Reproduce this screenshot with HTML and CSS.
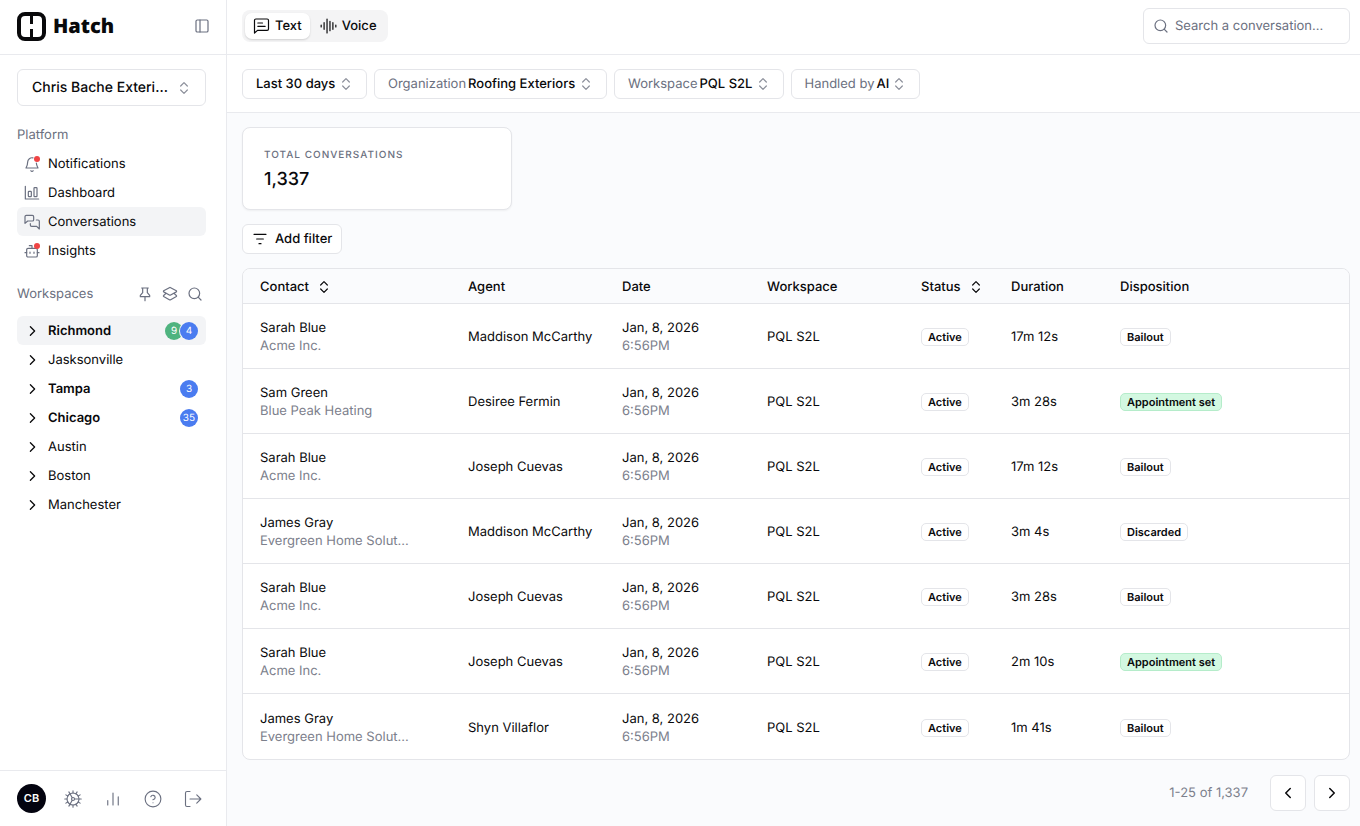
FILE: index.html
```html
<!DOCTYPE html>
<html lang="en">
<head>
  <meta charset="UTF-8" />
  <meta name="viewport" content="width=device-width, initial-scale=1.0"/>
  <title>Hatch - Conversations</title>
  <link rel="stylesheet" href="styles.css">
</head>
<body>

  <!-- icon sprite -->
  <svg class="sprite" aria-hidden="true">
    <symbol id="i-sort" viewBox="0 0 24 24"><path d="m7 15 5 5 5-5M7 9l5-5 5 5"/></symbol>
    <symbol id="i-right" viewBox="0 0 24 24"><path d="m9 18 6-6-6-6"/></symbol>
    <symbol id="i-left" viewBox="0 0 24 24"><path d="m15 18-6-6 6-6"/></symbol>
    <symbol id="i-search" viewBox="0 0 24 24"><circle cx="11" cy="11" r="8"/><path d="m21 21-4.3-4.3"/></symbol>
    <symbol id="i-panel" viewBox="0 0 24 24"><rect x="3" y="3" width="18" height="18" rx="2"/><path d="M9 3v18"/></symbol>
    <symbol id="i-bell" viewBox="0 0 24 24"><path d="M10.3 22a1.9 1.9 0 0 0 3.4 0M18.5 10.5c.3 3.5 1.3 5 2.5 7.500H3c1.500-2.500 2.500-5 2.500-9a6.500 6.500 0 0 1 8-6.200"/></symbol>
    <symbol id="i-chart" viewBox="0 0 24 24"><path d="M2 2v19h20"/><rect x="6.500" y="9.500" width="4.500" height="8" rx="1"/><rect x="15" y="4" width="4.500" height="13.500" rx="1"/></symbol>
    <symbol id="i-chats" viewBox="0 0 24 24"><path d="M14.500 8.500a2 2 0 0 1-2 2H5.500L1.500 14V4a2 2 0 0 1 2-2h9a2 2 0 0 1 2 2zM18.500 9H21a2 2 0 0 1 2 2v11.500l-4-4h-7.500a2 2 0 0 1-2-2V14.500"/></symbol>
    <symbol id="i-bot" viewBox="0 0 24 24"><path d="M12 8V4H8M1.500 14.500H4M20 14.500h2.500M15 13.500v2M9 13.500v2"/><rect x="4" y="8" width="16" height="13" rx="2"/></symbol>
    <symbol id="i-pin" viewBox="0 0 24 24"><path d="M12 16v6M7 3h10M8.500 3v7L5 14v2h14v-2l-3.500-4V3"/></symbol>
    <symbol id="i-layers" viewBox="0 0 24 24"><path d="M13 2.500a2 2 0 0 0-2 0L2.500 7.200a1 1 0 0 0 0 1.600L11 13.500a2 2 0 0 0 2 0l8.500-4.700a1 1 0 0 0 0-1.600zM6 11l-3.500 3.200a1 1 0 0 0 0 1.600l8.500 4.700a2 2 0 0 0 2 0l8.500-4.700a1 1 0 0 0 0-1.600L18 11"/></symbol>
    <symbol id="i-cog" viewBox="0 0 24 24"><circle cx="12" cy="12" r="8"/><circle cx="12" cy="12" r="2"/><path d="M14 12h9M11 10.300 6.500 2.500M11 13.700 6.500 21.500M12 1v3M12 20v3M1 12h3M17.500 2.500l-1.500 2.600M17.500 21.500l-1.500-2.600M2.500 6.500l2.600 1.500M21.500 6.500l-2.600 1.500M2.500 17.500l2.600-1.500M21.500 17.500l-2.600-1.500"/></symbol>
    <symbol id="i-bars" viewBox="0 0 24 24"><path d="M5 20v-6M12 20V4M19 20V9"/></symbol>
    <symbol id="i-help" viewBox="0 0 24 24"><circle cx="12" cy="12" r="10.500"/><path d="M9.100 9a3 3 0 0 1 5.800 1c0 2-3 3-3 3M12 17h.01"/></symbol>
    <symbol id="i-logout" viewBox="0 0 24 24"><path d="M8 22H4a2 2 0 0 1-2-2V4a2 2 0 0 1 2-2h4M8 12h14M17 6.500l5.500 5.500-5.500 5.500"/></symbol>
    <symbol id="i-message" viewBox="0 0 24 24"><path d="M22.500 16.500a2 2 0 0 1-2 2H6l-4.500 4V3.500a2 2 0 0 1 2-2h17a2 2 0 0 1 2 2zM6.500 7.500h7M6.500 12.500h11"/></symbol>
    <symbol id="i-audio" viewBox="0 0 24 24"><path d="M1 10.500v3M5.400 7v10M9.800 1.500v21M14.200 5v14M18.600 7v10M23 10.500v3"/></symbol>
    <symbol id="i-filter" viewBox="0 0 24 24"><path d="M3 5h18M7 12h10M10.500 19h3"/></symbol>
  </svg>

  <aside class="sidebar">
    <div class="brand">
      <a class="logo" href="#">
        <svg class="logo-mark" viewBox="0 0 29 29" aria-hidden="true">
          <rect x="2" y="2" width="25" height="25" rx="6"/>
          <path d="M14.500 3v9M14.500 17v9"/>
        </svg>
        Hatch
      </a>
      <button class="icon-btn" aria-label="Collapse sidebar"><svg class="icon"><use href="#i-panel"/></svg></button>
    </div>

    <div class="side-body">
      <div class="account">
        <select aria-label="Account"><option>Chris Bache Exteri...</option></select>
        <svg class="icon"><use href="#i-sort"/></svg>
      </div>

      <h2 class="side-title">Platform</h2>
      <nav class="side-nav" aria-label="Platform">
        <a href="#"><span class="nav-icon dot"><svg class="icon"><use href="#i-bell"/></svg></span>Notifications</a>
        <a href="#"><span class="nav-icon"><svg class="icon"><use href="#i-chart"/></svg></span>Dashboard</a>
        <a href="#" class="active"><span class="nav-icon"><svg class="icon"><use href="#i-chats"/></svg></span>Conversations</a>
        <a href="#"><span class="nav-icon dot"><svg class="icon"><use href="#i-bot"/></svg></span>Insights</a>
      </nav>

      <div class="side-head">
        <h2 class="side-title">Workspaces</h2>
        <div class="side-tools">
          <button class="icon-btn" aria-label="Pin"><svg class="icon"><use href="#i-pin"/></svg></button>
          <button class="icon-btn" aria-label="Group"><svg class="icon"><use href="#i-layers"/></svg></button>
          <button class="icon-btn" aria-label="Search workspaces"><svg class="icon"><use href="#i-search"/></svg></button>
        </div>
      </div>
      <nav class="side-nav workspaces" aria-label="Workspaces">
        <a href="#" class="active unread"><svg class="icon"><use href="#i-right"/></svg>Richmond<span class="counts"><span class="count green">9</span><span class="count">4</span></span></a>
        <a href="#"><svg class="icon"><use href="#i-right"/></svg>Jasksonville</a>
        <a href="#" class="unread"><svg class="icon"><use href="#i-right"/></svg>Tampa<span class="counts"><span class="count">3</span></span></a>
        <a href="#" class="unread"><svg class="icon"><use href="#i-right"/></svg>Chicago<span class="counts"><span class="count">35</span></span></a>
        <a href="#"><svg class="icon"><use href="#i-right"/></svg>Austin</a>
        <a href="#"><svg class="icon"><use href="#i-right"/></svg>Boston</a>
        <a href="#"><svg class="icon"><use href="#i-right"/></svg>Manchester</a>
      </nav>
    </div>

    <div class="side-footer">
      <span class="avatar">CB</span>
      <div class="footer-tools">
        <button class="icon-btn" aria-label="Settings"><svg class="icon"><use href="#i-cog"/></svg></button>
        <button class="icon-btn" aria-label="Reports"><svg class="icon"><use href="#i-bars"/></svg></button>
        <button class="icon-btn" aria-label="Help"><svg class="icon"><use href="#i-help"/></svg></button>
        <button class="icon-btn" aria-label="Log out"><svg class="icon"><use href="#i-logout"/></svg></button>
      </div>
    </div>
  </aside>

  <main class="main">
    <header class="topbar">
      <div class="tabs">
        <button class="tab active"><svg class="icon"><use href="#i-message"/></svg>Text</button>
        <button class="tab"><svg class="icon"><use href="#i-audio"/></svg>Voice</button>
      </div>
      <label class="search">
        <svg class="icon"><use href="#i-search"/></svg>
        <input type="text" placeholder="Search a conversation..." aria-label="Search a conversation">
      </label>
    </header>

    <div class="filters">
      <label class="filter"><select aria-label="Date range"><option>Last 30 days</option></select><svg class="icon"><use href="#i-sort"/></svg></label>
      <label class="filter"><span>Organization</span><select><option>Roofing Exteriors</option></select><svg class="icon"><use href="#i-sort"/></svg></label>
      <label class="filter"><span>Workspace</span><select><option>PQL S2L</option></select><svg class="icon"><use href="#i-sort"/></svg></label>
      <label class="filter"><span>Handled by</span><select><option>AI</option></select><svg class="icon"><use href="#i-sort"/></svg></label>
    </div>

    <div class="content">
      <div class="card">
        <div class="card-label">TOTAL CONVERSATIONS</div>
        <div class="card-value">1,337</div>
      </div>

      <button class="add-filter"><svg class="icon"><use href="#i-filter"/></svg>Add filter</button>

      <table class="table">
        <colgroup>
          <col class="col-contact"><col class="col-agent"><col class="col-date"><col class="col-workspace"><col class="col-status"><col class="col-duration"><col>
        </colgroup>
        <thead>
          <tr>
            <th><button class="sort">Contact<svg class="icon"><use href="#i-sort"/></svg></button></th>
            <th>Agent</th>
            <th>Date</th>
            <th>Workspace</th>
            <th><button class="sort">Status<svg class="icon"><use href="#i-sort"/></svg></button></th>
            <th>Duration</th>
            <th>Disposition</th>
          </tr>
        </thead>
        <tbody>
          <tr>
            <td>Sarah Blue<small>Acme Inc.</small></td>
            <td>Maddison McCarthy</td>
            <td>Jan, 8, 2026<small>6:56PM</small></td>
            <td>PQL S2L</td>
            <td><span class="badge">Active</span></td>
            <td>17m 12s</td>
            <td><span class="badge">Bailout</span></td>
          </tr>
          <tr>
            <td>Sam Green<small>Blue Peak Heating</small></td>
            <td>Desiree Fermin</td>
            <td>Jan, 8, 2026<small>6:56PM</small></td>
            <td>PQL S2L</td>
            <td><span class="badge">Active</span></td>
            <td>3m 28s</td>
            <td><span class="badge success">Appointment set</span></td>
          </tr>
          <tr>
            <td>Sarah Blue<small>Acme Inc.</small></td>
            <td>Joseph Cuevas</td>
            <td>Jan, 8, 2026<small>6:56PM</small></td>
            <td>PQL S2L</td>
            <td><span class="badge">Active</span></td>
            <td>17m 12s</td>
            <td><span class="badge">Bailout</span></td>
          </tr>
          <tr>
            <td>James Gray<small>Evergreen Home Solut...</small></td>
            <td>Maddison McCarthy</td>
            <td>Jan, 8, 2026<small>6:56PM</small></td>
            <td>PQL S2L</td>
            <td><span class="badge">Active</span></td>
            <td>3m 4s</td>
            <td><span class="badge">Discarded</span></td>
          </tr>
          <tr>
            <td>Sarah Blue<small>Acme Inc.</small></td>
            <td>Joseph Cuevas</td>
            <td>Jan, 8, 2026<small>6:56PM</small></td>
            <td>PQL S2L</td>
            <td><span class="badge">Active</span></td>
            <td>3m 28s</td>
            <td><span class="badge">Bailout</span></td>
          </tr>
          <tr>
            <td>Sarah Blue<small>Acme Inc.</small></td>
            <td>Joseph Cuevas</td>
            <td>Jan, 8, 2026<small>6:56PM</small></td>
            <td>PQL S2L</td>
            <td><span class="badge">Active</span></td>
            <td>2m 10s</td>
            <td><span class="badge success">Appointment set</span></td>
          </tr>
          <tr>
            <td>James Gray<small>Evergreen Home Solut...</small></td>
            <td>Shyn Villaflor</td>
            <td>Jan, 8, 2026<small>6:56PM</small></td>
            <td>PQL S2L</td>
            <td><span class="badge">Active</span></td>
            <td>1m 41s</td>
            <td><span class="badge">Bailout</span></td>
          </tr>
        </tbody>
      </table>

      <div class="pager">
        <span class="pager-text">1-25 of 1,337</span>
        <button aria-label="Previous page"><svg class="icon"><use href="#i-left"/></svg></button>
        <button aria-label="Next page"><svg class="icon"><use href="#i-right"/></svg></button>
      </div>
    </div>
  </main>

</body>
</html>
```
FILE: styles.css
```css
* {
  box-sizing: border-box;
  margin: 0;
  padding: 0;
}

body {
  display: flex;
  min-height: 100vh;
  background: #fafbfd;
  color: #09090b;
  font-family: Inter, sans-serif;
  font-size: 13px;
  line-height: 18px;
  text-rendering: geometricPrecision;
}

button,
select,
input {
  font: inherit;
  color: inherit;
  background: none;
  border: none;
  text-rendering: inherit;
}

button {
  cursor: pointer;
}

select {
  appearance: none;
  font-weight: 500;
  outline: none;
}

a {
  color: inherit;
  text-decoration: none;
}

.sprite {
  display: none;
}

.icon {
  width: 16px;
  height: 16px;
  flex: none;
  display: block;
  fill: none;
  stroke: currentColor;
  stroke-width: 1.8;
  stroke-linecap: round;
  stroke-linejoin: round;
}

.icon-btn {
  color: #6b7080;
}

/* sidebar */
.sidebar {
  width: 227px;
  flex: none;
  display: flex;
  flex-direction: column;
  background: #fff;
  border-right: 1px solid #e9eaee;
}

.brand {
  height: 55px;
  display: flex;
  align-items: center;
  justify-content: space-between;
  padding: 0 16px 2px 17px;
  border-bottom: 1px solid #e9eaee;
}

.logo {
  display: flex;
  align-items: center;
  gap: 7px;
  font-family: "Open Sans", sans-serif;
  font-size: 20px;
  font-weight: 800;
  line-height: 28px;
}

.logo-mark {
  width: 29px;
  height: 29px;
  fill: none;
  stroke: #09090b;
  stroke-width: 4;
}

.logo-mark path {
  stroke-width: 3;
}

.side-body {
  flex: 1;
  padding: 14px 20px 14px 17px;
}

.account {
  display: flex;
  align-items: center;
  height: 37px;
  padding: 0 13px 0 14px;
  border: 1px solid #e4e5e9;
  border-radius: 6px;
  margin-bottom: 20px;
}

.account select {
  flex: 1;
  min-width: 0;
  font-size: 14px;
}

.account .icon,
.filter .icon {
  color: #8b8f9a;
}

.side-title {
  font-size: 13px;
  font-weight: 400;
  color: #6b7080;
}

.side-nav {
  display: flex;
  flex-direction: column;
}

.side-nav a {
  display: flex;
  align-items: center;
  gap: 7px;
  height: 29px;
  padding: 0 8px 0 7px;
  border-radius: 6px;
}

.side-title + .side-nav {
  margin-top: 5px;
}

.side-nav .active {
  background: #f3f4f6;
}

.nav-icon {
  position: relative;
  width: 17px;
  color: #6b7080;
}

.nav-icon.dot::after {
  content: "";
  position: absolute;
  top: 0;
  right: 1px;
  width: 6px;
  height: 6px;
  border-radius: 50%;
  background: #ef4444;
}

.side-head {
  display: flex;
  align-items: center;
  justify-content: space-between;
  margin: 20px 3px 13px 0;
}

.side-tools {
  display: flex;
  gap: 9px;
}

.workspaces a > .icon {
  width: 17px;
  height: 18px;
}

.unread {
  font-weight: 600;
}

.counts {
  display: flex;
  margin-left: auto;
}

.count {
  width: 18px;
  height: 18px;
  border-radius: 50%;
  background: #4a7cf0;
  color: #fff;
  font-size: 10px;
  font-weight: 400;
  text-align: center;
}

.count + .count {
  margin-left: -3px;
  box-shadow: 0 0 0 1px #f3f4f6;
}

.count.green {
  background: #4fb37f;
}

.side-footer {
  display: flex;
  align-items: center;
  gap: 18px;
  height: 56px;
  padding: 0 17px;
  border-top: 1px solid #e9eaee;
}

.footer-tools {
  display: flex;
  gap: 22px;
}

.footer-tools .icon {
  width: 18px;
  height: 18px;
  stroke-width: 1.5;
}

.avatar {
  width: 29px;
  height: 29px;
  border-radius: 50%;
  background: #03030f;
  color: #fff;
  font-size: 11px;
  font-weight: 600;
  line-height: 29px;
  text-align: center;
}

/* top bars */
.main {
  flex: 1;
  min-width: 0;
}

.topbar {
  display: flex;
  align-items: center;
  justify-content: space-between;
  height: 55px;
  padding: 0 10px 2px 15px;
  background: #fff;
  border-bottom: 1px solid #e9eaee;
}

.tabs {
  display: flex;
  height: 32px;
  padding: 3px;
  background: #f4f4f5;
  border-radius: 8px;
}

.tab {
  display: flex;
  align-items: center;
  gap: 5px;
  padding: 0 8px;
  border-radius: 7px;
  font-weight: 500;
}

.tab .icon {
  width: 17px;
}

.tab.active {
  background: #fff;
  box-shadow: 0 1px 2px rgba(0, 0, 0, 0.15);
}

.tab + .tab {
  padding-left: 10px;
}

.search {
  display: flex;
  align-items: center;
  gap: 6px;
  width: 207px;
  height: 36px;
  padding: 0 9px;
  border: 1px solid #e4e5e9;
  border-radius: 6px;
  color: #6b7080;
}

.search input {
  flex: 1;
  min-width: 0;
  outline: none;
}

.search input::placeholder {
  color: #6b7080;
}

.filters {
  display: flex;
  align-items: center;
  gap: 7px;
  height: 58px;
  padding: 0 15px;
  background: #fff;
  border-bottom: 1px solid #e9eaee;
}

.filter {
  display: flex;
  align-items: center;
  gap: 2px;
  height: 30px;
  padding: 0 12px 0 13px;
  border: 1px solid #e4e5e9;
  border-radius: 6px;
  color: #6b7080;
}

.filter select {
  color: #09090b;
}

/* content */
.content {
  padding: 14px 10px 14px 15px;
}

.card {
  width: 270px;
  height: 83px;
  padding: 18px 21px;
  background: #fff;
  border: 1px solid #e4e5e9;
  border-radius: 8px;
  box-shadow: 0 1px 2px rgba(0, 0, 0, 0.05);
}

.card-label {
  font-size: 10px;
  font-weight: 500;
  letter-spacing: 1px;
  color: #6b7080;
}

.card-value {
  margin-top: 4px;
  font-size: 18px;
  font-weight: 500;
  line-height: 24px;
}

.add-filter {
  display: flex;
  align-items: center;
  gap: 7px;
  height: 30px;
  margin: 14px 0;
  padding: 0 9px;
  background: #fff;
  border: 1px solid #e4e5e9;
  border-radius: 6px;
  font-weight: 500;
}

.table {
  width: 100%;
  table-layout: fixed;
  border-spacing: 0;
  background: #fff;
  border: 1px solid #e4e5e9;
  border-radius: 8px;
  overflow: hidden;
}

.col-contact {
  width: 208px;
}

.col-agent,
.col-workspace {
  width: 154px;
}

.col-date {
  width: 145px;
}

.col-status {
  width: 90px;
}

.col-duration {
  width: 109px;
}

th {
  height: 35px;
  padding: 1px 0 0 17px;
  background: #fafbfd;
  border-bottom: 1px solid #e4e5e9;
  font-weight: 500;
  text-align: left;
}

.sort {
  display: flex;
  align-items: center;
  gap: 7px;
}

td {
  height: 65px;
  padding: 2px 0 0 17px;
  border-bottom: 1px solid #e4e5e9;
  white-space: nowrap;
}

tr:last-child td {
  border-bottom: none;
}

td small {
  display: block;
  font-size: 13px;
  color: #7c808c;
}

.badge {
  display: inline-block;
  padding: 0 6px;
  border: 1px solid #e4e5e9;
  border-radius: 5px;
  font-size: 11px;
  font-weight: 600;
  line-height: 16px;
}

.badge.success {
  background: #d3f8e1;
  border-color: #b5ecca;
}

.pager {
  display: flex;
  align-items: center;
  justify-content: flex-end;
  gap: 8px;
  margin-top: 15px;
}

.pager-text {
  margin-right: 14px;
  color: #7c808c;
}

.pager button {
  display: flex;
  align-items: center;
  justify-content: center;
  width: 36px;
  height: 36px;
  background: #fff;
  border: 1px solid #e4e5e9;
  border-radius: 6px;
}

.pager .icon {
  width: 18px;
  height: 18px;
  stroke-width: 2;
}
```
